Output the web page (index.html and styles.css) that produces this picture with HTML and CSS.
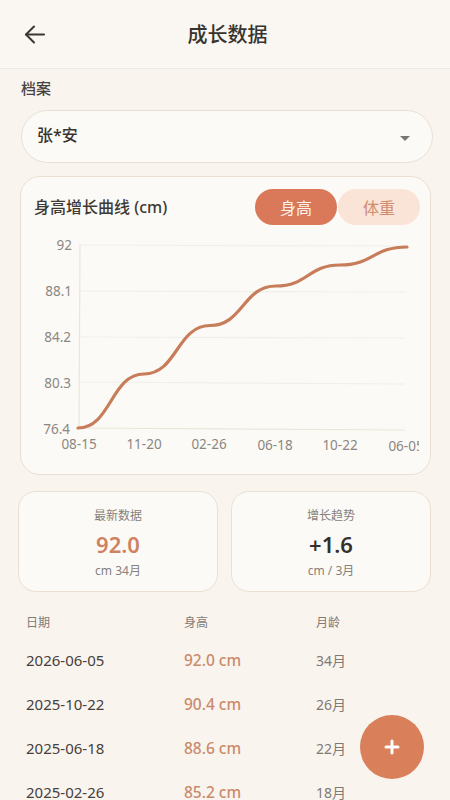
FILE: index.html
```html
<!DOCTYPE html>
<html lang="zh-CN">
<head>
  <meta charset="UTF-8">
  <meta name="viewport" content="width=device-width, initial-scale=1.0">
  <title>成长数据</title>
  <link rel="stylesheet" href="styles.css">
</head>
<body>
  <div class="page">
    <header class="topbar">
      <button class="back-button" aria-label="返回">
        <svg width="24" height="24" viewBox="0 0 24 24" fill="none" stroke="#3a3633" stroke-width="2" stroke-linecap="round" stroke-linejoin="round">
          <path d="M21 12.500H3"/>
          <path d="M11 4.500 3 12.500l8 8"/>
        </svg>
      </button>
      <h1>成长数据</h1>
    </header>

    <main class="content">
      <div class="field-label">档案</div>
      <div class="select-box">
        <span>张*安</span>
        <i class="select-arrow"></i>
      </div>

      <section class="chart-card">
        <div class="chart-head">
          <h2>身高增长曲线 (cm)</h2>
          <div class="tabs">
            <span class="tab tab-active">身高</span>
            <span class="tab">体重</span>
          </div>
        </div>
        <svg class="chart" width="398" height="232" viewBox="20 232 398 232">
          <g class="grid-lines">
            <line x1="78" y1="245" x2="405" y2="246"/>
            <line x1="79" y1="291" x2="405" y2="292"/>
            <line x1="79" y1="337" x2="404" y2="338"/>
            <line x1="79" y1="382" x2="404" y2="384"/>
          </g>
          <g class="axis-lines">
            <line x1="79" y1="245" x2="78" y2="428"/>
            <line x1="78" y1="428" x2="404" y2="430"/>
          </g>
          <g class="y-labels">
            <text x="71" y="250">92</text>
            <text x="71" y="296">88.1</text>
            <text x="70" y="342">84.2</text>
            <text x="70" y="388">80.3</text>
            <text x="69" y="434">76.4</text>
          </g>
          <g class="x-labels">
            <text x="78" y="449">08-15</text>
            <text x="143" y="449">11-20</text>
            <text x="208" y="449">02-26</text>
            <text x="274" y="450">06-18</text>
            <text x="339" y="450">10-22</text>
            <text x="405" y="451">06-05</text>
          </g>
          <path class="curve" d="M77 428C110 428 110 374 143 374C176 374 176 325.500 209 325.500C242 325.500 242 286 275 286C307 286 307 265 339 265C372 265 372 247 406 247"/>
        </svg>
      </section>

      <div class="stats">
        <div class="stat-card">
          <div class="stat-title">最新数据</div>
          <div class="stat-value accent">92.0</div>
          <div class="stat-note">cm 34月</div>
        </div>
        <div class="stat-card">
          <div class="stat-title">增长趋势</div>
          <div class="stat-value">+1.6</div>
          <div class="stat-note">cm / 3月</div>
        </div>
      </div>

      <div class="records">
        <div class="row row-head">
          <span>日期</span>
          <span>身高</span>
          <span>月龄</span>
        </div>
        <div class="row">
          <span class="date">2026-06-05</span>
          <span class="height">92.0 cm</span>
          <span class="age">34月</span>
        </div>
        <div class="row">
          <span class="date">2025-10-22</span>
          <span class="height">90.4 cm</span>
          <span class="age">26月</span>
        </div>
        <div class="row">
          <span class="date">2025-06-18</span>
          <span class="height">88.6 cm</span>
          <span class="age">22月</span>
        </div>
        <div class="row">
          <span class="date">2025-02-26</span>
          <span class="height">85.2 cm</span>
          <span class="age">18月</span>
        </div>
      </div>
    </main>

    <button class="fab" aria-label="添加">
      <svg width="20" height="20" viewBox="0 0 20 20" stroke="#fff" stroke-width="3" stroke-linecap="round">
        <path d="M10 4v12M4 10h12"/>
      </svg>
    </button>
  </div>
</body>
</html>
```

FILE: styles.css
```css
* {
  margin: 0;
  padding: 0;
  box-sizing: border-box;
}

body {
  font-family: "Noto Sans", "Noto Sans CJK SC", sans-serif;
  background: #faf4ef;
  color: #37332f;
}

.page {
  position: relative;
  width: 450px;
  height: 800px;
  overflow: hidden;
}

.topbar {
  height: 69px;
  padding-top: 19px;
  border-bottom: 1px solid #ece8e3;
  background: #faf6f1;
  position: relative;
  text-align: center;
}

.topbar h1 {
  font-size: 20px;
  line-height: 32px;
  font-weight: 500;
  margin-left: 5px;
}

.back-button {
  position: absolute;
  left: 23px;
  top: 22px;
  width: 24px;
  height: 24px;
  background: none;
  border: none;
}

.content {
  padding: 9px 19px 0 19px;
}

.field-label {
  font-size: 15px;
  line-height: 20px;
  margin-left: 2px;
  font-weight: 500;
  color: #48433f;
}

.select-box {
  margin: 12px 0 0 2px;
  height: 53px;
  width: 412px;
  padding: 0 22px 5px 15px;
  display: flex;
  align-items: center;
  justify-content: space-between;
  font-size: 16px;
  font-weight: 500;
  background: #fcfaf6;
  border: 1.5px solid #e9e0d3;
  border-radius: 27px;
}

.select-arrow {
  width: 0;
  height: 0;
  margin-top: 8px;
  border-left: 5px solid transparent;
  border-right: 5px solid transparent;
  border-top: 5px solid #7b7672;
}

.chart-card {
  margin: 13px 0 0 1px;
  width: 411px;
  height: 299px;
  background: #fcfaf6;
  border: 1.5px solid #e9e0d3;
  border-radius: 20px;
  padding-top: 12px;
}

.chart-head {
  display: flex;
  align-items: center;
  justify-content: space-between;
  padding: 0 10px 0 13px;
}

.chart-head h2 {
  font-size: 16px;
  font-weight: 500;
  color: #3d3935;
  padding-bottom: 3px;
}

.tabs {
  display: flex;
  gap: 1px;
}

.tab {
  width: 82px;
  height: 36px;
  padding-bottom: 1px;
  border-radius: 18px;
  display: flex;
  align-items: center;
  justify-content: center;
  font-size: 16px;
  background: #fae3d7;
  color: #d08c6f;
}

.tab-active {
  background: #d9795a;
  color: #fdf3ec;
}

.chart {
  display: block;
  margin-top: 7px;
  overflow: hidden;
}

.grid-lines line {
  stroke: #f1efe9;
  stroke-width: 1.2;
}

.axis-lines line {
  stroke: #e9e6da;
  stroke-width: 1.2;
}

.y-labels text,
.x-labels text {
  font-size: 13.5px;
  fill: #8b8782;
}

.y-labels text {
  text-anchor: end;
}

.x-labels text {
  text-anchor: middle;
}

.curve {
  fill: none;
  stroke: #c77c5a;
  stroke-width: 3.2;
  stroke-linecap: round;
}

.stats {
  display: flex;
  gap: 13px;
  margin: 16px 0 0 -1px;
}

.stat-card {
  width: 200px;
  height: 101px;
  background: #fcfaf6;
  border: 1.5px solid #e9e0d3;
  border-radius: 18px;
  text-align: center;
  padding-top: 15px;
}

.stat-title {
  font-size: 12px;
  line-height: 18px;
  color: #86817c;
}

.stat-value {
  font-size: 22px;
  line-height: 30px;
  margin-top: 4px;
  font-weight: 600;
  color: #34302d;
}

.stat-value.accent {
  color: #cf8261;
}

.stat-note {
  font-size: 12px;
  line-height: 18px;
  margin-top: 3px;
  color: #86817c;
}

.records {
  margin: 19px 0 0 7px;
}

.row {
  display: grid;
  grid-template-columns: 158px 132px 1fr;
  height: 44px;
  align-items: center;
  font-size: 15px;
}

.row-head {
  height: 22px;
  margin-bottom: 5px;
  font-size: 12px;
  color: #7f7a75;
}

.date {
  color: #45413d;
}

.height {
  font-size: 15.5px;
  font-weight: 500;
  color: #c98b6c;
}

.age {
  font-size: 14px;
  color: #7f7a75;
}

.fab {
  position: absolute;
  left: 360px;
  top: 715px;
  width: 64px;
  height: 64px;
  border: none;
  border-radius: 50%;
  background: #d97f59;
  display: flex;
  align-items: center;
  justify-content: center;
}
```
